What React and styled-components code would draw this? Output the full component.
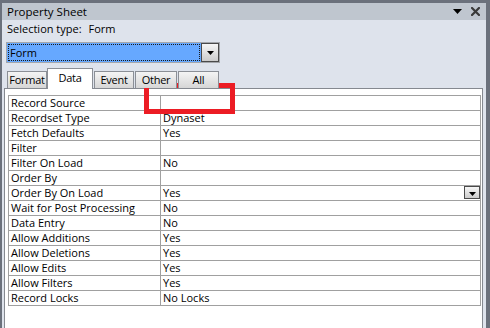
import React from 'react';
import styled, { createGlobalStyle } from 'styled-components';

const GlobalStyle = createGlobalStyle`
  html, body { margin: 0; padding: 0; background: #6b717c; }
  body {
    font-family: "Open Sans", "Noto Sans", "DejaVu Sans", sans-serif;
    font-size: 11px;
    color: #000;
  }
`;

const Frame = styled.div`
  position: relative;
  width: 490px;
  height: 328px;
  box-sizing: border-box;
  padding: 3px 4px 0 2px;
  background: #6b717c;
  overflow: hidden;
  display: flex;
`;

const Panel = styled.div`
  flex: 1;
  background: #dee3ec;
  display: flex;
  flex-direction: column;
`;

const TitleBar = styled.div`
  height: 17px;
  background: #bfc6cf;
  display: flex;
  align-items: center;
  padding: 0 6px 0 5px;
  font-size: 11.5px;
  line-height: 17px;
`;

const TitleIcons = styled.div`
  margin-left: auto;
  display: flex;
  align-items: center;
  gap: 9px;
`;

const SelectionRow = styled.div`
  height: 18px;
  line-height: 18px;
  padding-left: 5px;
  white-space: nowrap;
`;

const SelectionValue = styled.span`
  margin-left: 7px;
`;

const Combo = styled.div`
  margin: 4px 0 0 4px;
  width: 214px;
  height: 21px;
  box-sizing: border-box;
  border: 1px solid #a3a6ab;
  background: #fff;
  display: flex;
`;

const ComboField = styled.div`
  flex: 1;
  background: #66a8ff;
  padding: 1px;
  display: flex;
`;

const FocusRect = styled.div`
  flex: 1;
  border: 1px dotted #1a1a1a;
  padding-left: 1px;
  line-height: 15px;
`;

const DropButton = styled.div`
  width: ${(p) => p.$w}px;
  height: ${(p) => p.$h}px;
  box-sizing: border-box;
  border: 1px solid #4a4a4a;
  background: linear-gradient(#f6f6f6, #cbcbcb);
  display: flex;
  align-items: ${(p) => (p.$low ? 'flex-end' : 'center')};
  justify-content: center;
  padding-bottom: ${(p) => (p.$low ? 2 : 0)}px;
  flex-shrink: 0;
`;

const TabRow = styled.div`
  position: relative;
  z-index: 1;
  height: 21px;
  margin-top: 5px;
  padding-left: 5px;
  display: flex;
  align-items: flex-end;
`;

const Tab = styled.div`
  width: ${(p) => p.$w}px;
  margin-left: ${(p) => p.$gap}px;
  box-sizing: border-box;
  border: 1px solid #8b8f96;
  border-bottom: none;
  text-align: center;
  letter-spacing: -0.25px;
  white-space: nowrap;
  overflow: hidden;
  height: ${(p) => (p.$active ? 21 : 17)}px;
  margin-bottom: ${(p) => (p.$active ? 0 : 1)}px;
  line-height: ${(p) => (p.$active ? 17 : 16)}px;
  background: ${(p) => (p.$active ? '#fff' : 'linear-gradient(#f4f4f4, #d6d6d6)')};
`;

const ContentBox = styled.div`
  flex: 1;
  margin: -1px 0 0 2px;
  width: 479px;
  box-sizing: border-box;
  border: 1px solid #858990;
  border-bottom: none;
  background: #fff;
  padding: 6px 0 0 3px;
`;

const Grid = styled.div`
  width: 473px;
  box-sizing: border-box;
  border: 1px solid #a0a0a0;
  border-top: none;
`;

const Row = styled.div`
  display: flex;
  height: 15px;
  box-sizing: border-box;
  border-top: 1px solid #a0a0a0;
  line-height: 14px;
`;

const Label = styled.div`
  width: 152px;
  box-sizing: border-box;
  border-right: 1px solid #a0a0a0;
  padding-left: 2px;
  white-space: nowrap;
`;

const Value = styled.div`
  flex: 1;
  padding-left: 2px;
  display: flex;
  justify-content: space-between;
  align-items: flex-start;
  white-space: nowrap;
`;

const Highlight = styled.div`
  position: absolute;
  left: 144px;
  top: 83px;
  width: 91px;
  height: 31px;
  box-sizing: border-box;
  border: 5px solid #ec1c24;
`;

const Arrow = ({ w = 7, h = 4 }) => (
  <svg width={w} height={h} viewBox={`0 0 ${w} ${h}`}>
    <polygon points={`0,0 ${w},0 ${w / 2},${h}`} fill="#000" />
  </svg>
);

const CloseIcon = () => (
  <svg width="9" height="9" viewBox="0 0 9 9">
    <path d="M1 1 L8 8 M8 1 L1 8" stroke="#3a3a3a" strokeWidth="2.2" strokeLinecap="square" />
  </svg>
);

const tabs = [
  { label: 'Format', w: 40, gap: 0 },
  { label: 'Data', w: 46, gap: 0, active: true },
  { label: 'Event', w: 40, gap: 1 },
  { label: 'Other', w: 42, gap: 1 },
  { label: 'All', w: 41, gap: 1 },
];

const rows = [
  ['Record Source', ''],
  ['Recordset Type', 'Dynaset'],
  ['Fetch Defaults', 'Yes'],
  ['Filter', ''],
  ['Filter On Load', 'No'],
  ['Order By', ''],
  ['Order By On Load', 'Yes', true],
  ['Wait for Post Processing', 'No'],
  ['Data Entry', 'No'],
  ['Allow Additions', 'Yes'],
  ['Allow Deletions', 'Yes'],
  ['Allow Edits', 'Yes'],
  ['Allow Filters', 'Yes'],
  ['Record Locks', 'No Locks'],
];

export default function App() {
  return (
    <>
      <GlobalStyle />
      <Frame>
        <Panel>
          <TitleBar>
            <span>Property Sheet</span>
            <TitleIcons>
              <Arrow w={9} h={5} />
              <CloseIcon />
            </TitleIcons>
          </TitleBar>
          <SelectionRow>
            Selection type:<SelectionValue>Form</SelectionValue>
          </SelectionRow>
          <Combo>
            <ComboField>
              <FocusRect>Form</FocusRect>
            </ComboField>
            <DropButton $w={18} $h={19}>
              <Arrow w={7} h={4} />
            </DropButton>
          </Combo>
          <TabRow>
            {tabs.map((t) => (
              <Tab key={t.label} $w={t.w} $gap={t.gap} $active={t.active}>
                {t.label}
              </Tab>
            ))}
          </TabRow>
          <ContentBox>
            <Grid>
              {rows.map(([label, value, drop]) => (
                <Row key={label}>
                  <Label>{label}</Label>
                  <Value>
                    <span>{value}</span>
                    {drop && (
                      <DropButton $w={16} $h={13} $low>
                        <Arrow w={7} h={4} />
                      </DropButton>
                    )}
                  </Value>
                </Row>
              ))}
            </Grid>
          </ContentBox>
        </Panel>
        <Highlight />
      </Frame>
    </>
  );
}
